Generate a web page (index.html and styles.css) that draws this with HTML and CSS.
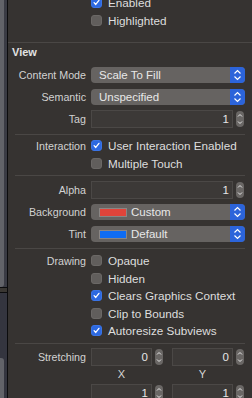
FILE: index.html
```html
<!DOCTYPE html>
<html lang="en">
<head>
    <meta charset="UTF-8">
    <meta name="viewport" content="width=device-width, initial-scale=1.0">
    <title>View Inspector</title>
    <link rel="stylesheet" href="styles.css">
</head>
<body>
    <div class="inspector">
        <!-- strip of the neighbouring pane on the left -->
        <div class="edge">
            <div class="edge-top"><div class="edge-tab"></div></div>
            <div class="edge-mid"></div>
            <div class="edge-bottom"><div class="edge-tab edge-tab-low"></div></div>
        </div>

        <div class="panel">
            <div class="group state">
                <div class="row check-row">
                    <span class="label"></span>
                    <div class="check"><span class="box on"><svg viewBox="0 0 11 11"><path d="M2.6 5.7 L4.6 7.9 L8.5 2.9"/></svg></span>Enabled</div>
                </div>
                <div class="row check-row">
                    <span class="label"></span>
                    <div class="check"><span class="box"></span>Highlighted</div>
                </div>
            </div>

            <div class="rule full"></div>
            <div class="heading">View</div>

            <div class="group controls">
                <div class="row field-row">
                    <span class="label">Content Mode</span>
                    <div class="popup"><span class="popup-text">Scale To Fill</span><span class="popup-arrows"><svg viewBox="0 0 15 16"><path d="M4.5 6.5 L7.5 3.6 L10.5 6.5 M4.5 9.5 L7.5 12.4 L10.5 9.5"/></svg></span></div>
                </div>
                <div class="row field-row">
                    <span class="label">Semantic</span>
                    <div class="popup"><span class="popup-text">Unspecified</span><span class="popup-arrows"><svg viewBox="0 0 15 16"><path d="M4.5 6.5 L7.5 3.6 L10.5 6.5 M4.5 9.5 L7.5 12.4 L10.5 9.5"/></svg></span></div>
                </div>
                <div class="row field-row">
                    <span class="label">Tag</span>
                    <div class="number">
                        <div class="field">1</div>
                        <span class="stepper"><svg viewBox="0 0 8 16"><path d="M2 5.5 L4 3.5 L6 5.5 M2 10.5 L4 12.5 L6 10.5"/></svg></span>
                    </div>
                </div>
            </div>

            <div class="rule"></div>

            <div class="group interaction">
                <div class="row check-row">
                    <span class="label">Interaction</span>
                    <div class="check"><span class="box on"><svg viewBox="0 0 11 11"><path d="M2.6 5.7 L4.6 7.9 L8.5 2.9"/></svg></span>User Interaction Enabled</div>
                </div>
                <div class="row check-row">
                    <span class="label"></span>
                    <div class="check"><span class="box"></span>Multiple Touch</div>
                </div>
            </div>

            <div class="rule"></div>

            <div class="group controls appearance">
                <div class="row field-row">
                    <span class="label">Alpha</span>
                    <div class="number">
                        <div class="field">1</div>
                        <span class="stepper"><svg viewBox="0 0 8 16"><path d="M2 5.5 L4 3.5 L6 5.5 M2 10.5 L4 12.5 L6 10.5"/></svg></span>
                    </div>
                </div>
                <div class="row field-row">
                    <span class="label">Background</span>
                    <div class="popup"><span class="popup-text"><span class="swatch red"></span>Custom</span><span class="popup-arrows"><svg viewBox="0 0 15 16"><path d="M4.5 6.5 L7.5 3.6 L10.5 6.5 M4.5 9.5 L7.5 12.4 L10.5 9.5"/></svg></span></div>
                </div>
                <div class="row field-row">
                    <span class="label">Tint</span>
                    <div class="popup"><span class="popup-text"><span class="swatch blue"></span>Default</span><span class="popup-arrows"><svg viewBox="0 0 15 16"><path d="M4.5 6.5 L7.5 3.6 L10.5 6.5 M4.5 9.5 L7.5 12.4 L10.5 9.5"/></svg></span></div>
                </div>
            </div>

            <div class="rule"></div>

            <div class="group drawing">
                <div class="row check-row">
                    <span class="label">Drawing</span>
                    <div class="check"><span class="box"></span>Opaque</div>
                </div>
                <div class="row check-row">
                    <span class="label"></span>
                    <div class="check"><span class="box"></span>Hidden</div>
                </div>
                <div class="row check-row">
                    <span class="label"></span>
                    <div class="check"><span class="box on"><svg viewBox="0 0 11 11"><path d="M2.6 5.7 L4.6 7.9 L8.5 2.9"/></svg></span>Clears Graphics Context</div>
                </div>
                <div class="row check-row">
                    <span class="label"></span>
                    <div class="check"><span class="box"></span>Clip to Bounds</div>
                </div>
                <div class="row check-row">
                    <span class="label"></span>
                    <div class="check"><span class="box on"><svg viewBox="0 0 11 11"><path d="M2.6 5.7 L4.6 7.9 L8.5 2.9"/></svg></span>Autoresize Subviews</div>
                </div>
            </div>

            <div class="rule"></div>

            <div class="group stretching">
                <div class="row pair-row">
                    <span class="label">Stretching</span>
                    <div class="pairs">
                        <div class="number">
                            <div class="field">0</div>
                            <span class="stepper"><svg viewBox="0 0 8 16"><path d="M2 5.5 L4 3.5 L6 5.5 M2 10.5 L4 12.5 L6 10.5"/></svg></span>
                        </div>
                        <div class="number">
                            <div class="field">0</div>
                            <span class="stepper"><svg viewBox="0 0 8 16"><path d="M2 5.5 L4 3.5 L6 5.5 M2 10.5 L4 12.5 L6 10.5"/></svg></span>
                        </div>
                    </div>
                </div>
                <div class="row axis-row">
                    <span class="label"></span>
                    <div class="pairs">
                        <span class="axis">X</span>
                        <span class="axis">Y</span>
                    </div>
                </div>
                <div class="row pair-row">
                    <span class="label"></span>
                    <div class="pairs">
                        <div class="number">
                            <div class="field">1</div>
                            <span class="stepper"><svg viewBox="0 0 8 16"><path d="M2 5.5 L4 3.5 L6 5.5 M2 10.5 L4 12.5 L6 10.5"/></svg></span>
                        </div>
                        <div class="number">
                            <div class="field">1</div>
                            <span class="stepper"><svg viewBox="0 0 8 16"><path d="M2 5.5 L4 3.5 L6 5.5 M2 10.5 L4 12.5 L6 10.5"/></svg></span>
                        </div>
                    </div>
                </div>
            </div>
        </div>
    </div>
</body>
</html>
```

FILE: styles.css
```css
body {
    margin: 0;
    height: 398px;
    overflow: hidden;
    background-color: #363331;
    font-family: "Liberation Sans", Arial, sans-serif;
    font-size: 11px;
    color: #d6d6d6;
}
.inspector {
    display: flex;
    height: 398px;
}

/* left neighbour strip */
.edge {
    width: 7px;
    flex-shrink: 0;
    border-right: 1px solid #0c0c0e;
    display: flex;
    flex-direction: column;
}
.edge-top {
    height: 288px;
    background-color: #3a3b44;
}
.edge-tab {
    width: 4px;
    height: 287px;
    background-color: #626369;
    border-bottom-right-radius: 3px;
}
.edge-mid {
    height: 28px;
    background-color: #3a3733;
    border-top: 1px solid #0c0c0e;
    border-bottom: 1px solid #0c0c0e;
}
.edge-bottom {
    flex: 1;
    background-color: #34353f;
    padding-top: 65px;
}
.edge-tab-low {
    height: 40px;
    border-bottom-right-radius: 0;
    border-top-right-radius: 3px;
}

.panel {
    flex: 1;
    min-width: 0;
}
.rule {
    height: 1px;
    margin: 0 7px;
    background-color: #4a4745;
}
.rule.full {
    margin: 0;
}
.heading {
    height: 18px;
    line-height: 18px;
    padding-left: 4px;
    font-weight: bold;
    color: #e2e2e2;
}

.row {
    display: grid;
    grid-template-columns: 78px 1fr;
    column-gap: 5px;
    padding-right: 7px;
    align-items: center;
}
.label {
    text-align: right;
    white-space: nowrap;
    font-size: 10.7px;
    color: #d2d2d2;
}

.group.state {
    margin-top: -7px;
    padding-bottom: 13px;
}
.group.state .check-row {
    height: 18px;
}
.check-row {
    height: 17.5px;
}
.group.interaction {
    padding: 2px 0 3px;
}
.group.drawing {
    padding: 3px 0 3.5px;
}
.check {
    display: flex;
    align-items: center;
    gap: 6px;
    font-size: 11.7px;
    color: #dedede;
    white-space: nowrap;
}
.box {
    width: 11px;
    height: 11px;
    box-sizing: border-box;
    border-radius: 3px;
    background-color: #615e5c;
    border: 1px solid #6b6866;
    flex-shrink: 0;
}
.box.on {
    background-color: #2d69e0;
    border-color: #3a74e6;
}
.box svg {
    display: block;
    width: 9px;
    height: 9px;
    fill: none;
    stroke: #fff;
    stroke-width: 1.6;
    stroke-linecap: round;
    stroke-linejoin: round;
}

.group.controls {
    padding: 3px 0 4px;
}
.group.appearance {
    padding: 3px 0 3px;
}
.field-row {
    height: 22px;
}
.popup {
    display: flex;
    height: 16px;
    border-radius: 4px;
    background-color: #666361;
    overflow: hidden;
}
.popup-text {
    flex: 1;
    display: flex;
    align-items: center;
    gap: 4px;
    padding-left: 8px;
    font-size: 11.5px;
    color: #e8e8e8;
}
.popup-arrows {
    width: 15px;
    background-color: #2c64da;
}
.popup-arrows svg {
    display: block;
    width: 15px;
    height: 16px;
    fill: none;
    stroke: #fff;
    stroke-width: 1.2;
}
.swatch {
    width: 28px;
    height: 9px;
    box-sizing: border-box;
    border: 1px solid #8a8684;
}
.swatch.red {
    background-color: #e0443a;
}
.swatch.blue {
    background-color: #0f6cf2;
}

.number {
    display: flex;
    align-items: center;
    gap: 3px;
    padding-right: 1px;
}
.field {
    flex: 1;
    height: 18px;
    box-sizing: border-box;
    border: 1px solid #4b4846;
    background-color: #3c3937;
    text-align: right;
    padding-right: 3px;
    line-height: 16px;
    font-size: 11.5px;
    color: #e6e6e6;
}
.stepper {
    width: 8px;
    height: 16px;
    border-radius: 4px;
    background-color: #6a6765;
}
.stepper svg {
    display: block;
    width: 8px;
    height: 16px;
    fill: none;
    stroke: #e8e8e8;
    stroke-width: 1;
}

.group.stretching {
    padding-top: 4px;
}
.pairs {
    display: grid;
    grid-template-columns: 72px 72px;
    column-gap: 9px;
}
.pairs .number {
    padding-right: 0;
}
.pair-row {
    height: 18px;
}
.axis-row {
    height: 14px;
    margin-bottom: 4px;
}
.axis {
    width: 61px;
    text-align: center;
    line-height: 14px;
    padding-top: 1px;
    color: #d6d6d6;
}
```
